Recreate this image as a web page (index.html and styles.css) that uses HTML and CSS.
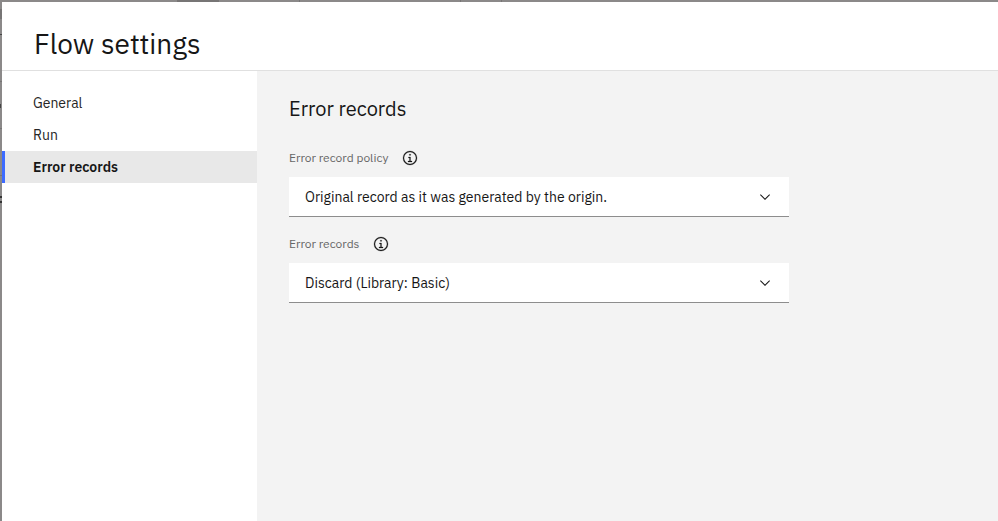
FILE: index.html
```
<!DOCTYPE html>
<html lang="en">
<head>
<meta charset="utf-8">
<meta name="viewport" content="width=device-width, initial-scale=1">
<title>Flow settings</title>
<link rel="stylesheet" href="styles.css">
</head>
<body>
<div class="modal" role="dialog" aria-labelledby="modal-title">
  <header class="modal-header">
    <h1 id="modal-title">Flow settings</h1>
  </header>
  <div class="modal-body">
    <nav class="side-nav">
      <a class="nav-link" href="#general">General</a>
      <a class="nav-link" href="#run">Run</a>
      <a class="nav-link nav-link-active" href="#error-records" aria-current="page">Error records</a>
    </nav>
    <main class="panel">
      <h2>Error records</h2>
      <div class="field">
        <div class="field-label">
          <label for="policy">Error record policy</label>
          <button class="info" type="button" aria-label="More information">
            <svg viewBox="0 0 32 32"><path d="M17 22V14h-4v2h2v6h-3v2h8v-2zM16 8a1.500 1.500 0 1 0 1.500 1.500A1.500 1.500 0 0 0 16 8z"/><path d="M16 30a14 14 0 1 1 14-14 14 14 0 0 1-14 14zm0-26a12 12 0 1 0 12 12A12 12 0 0 0 16 4z"/></svg>
          </button>
        </div>
        <div class="select-wrap">
          <select id="policy"><option>Original record as it was generated by the origin.</option></select>
          <svg class="chevron" viewBox="0 0 16 16"><path d="M8 11L3 6l.7-.7L8 9.600l4.300-4.300.7.7z"/></svg>
        </div>
      </div>
      <div class="field">
        <div class="field-label">
          <label for="target">Error records</label>
          <button class="info" type="button" aria-label="More information">
            <svg viewBox="0 0 32 32"><path d="M17 22V14h-4v2h2v6h-3v2h8v-2zM16 8a1.500 1.500 0 1 0 1.500 1.500A1.500 1.500 0 0 0 16 8z"/><path d="M16 30a14 14 0 1 1 14-14 14 14 0 0 1-14 14zm0-26a12 12 0 1 0 12 12A12 12 0 0 0 16 4z"/></svg>
          </button>
        </div>
        <div class="select-wrap">
          <select id="target"><option>Discard (Library: Basic)</option></select>
          <svg class="chevron" viewBox="0 0 16 16"><path d="M8 11L3 6l.7-.7L8 9.600l4.300-4.300.7.7z"/></svg>
        </div>
      </div>
    </main>
  </div>
</div>
</body>
</html>
```
FILE: styles.css
```
* {
  box-sizing: border-box;
}

/* The dimmed page behind the dialog shows along the top and left edges. */
body {
  margin: 0;
  min-height: 100vh;
  display: flex;
  padding: 2px 0 0 2px;
  background:
    linear-gradient(#777575, #777575) 177px 0 / 42px 2px no-repeat,
    linear-gradient(#777575, #777575) 299px 0 / 1px 2px no-repeat,
    linear-gradient(#777575, #777575) 460px 0 / 1px 2px no-repeat,
    linear-gradient(#777575, #777575) 501px 0 / 1px 2px no-repeat,
    linear-gradient(#777575, #777575) 0 9px / 2px 10px no-repeat,
    linear-gradient(#444, #444) 0 34px / 2px 1px no-repeat,
    linear-gradient(#777575, #777575) 0 81px / 2px 1px no-repeat,
    linear-gradient(#444, #444) 0 104px / 1px 4px no-repeat,
    linear-gradient(#777575, #777575) 0 128px / 2px 1px no-repeat,
    linear-gradient(#777575, #777575) 0 175px / 2px 1px no-repeat,
    linear-gradient(#333, #333) 0 196px / 2px 2px no-repeat,
    linear-gradient(#333, #333) 0 201px / 2px 2px no-repeat,
    #8b8989;
  color: #161616;
  font-family: "IBM Plex Sans", Roboto, "Liberation Sans", sans-serif;
  font-size: 14px;
  line-height: 18px;
}

.modal {
  flex: 1;
  display: flex;
  flex-direction: column;
  background: #fff;
}

.modal-header {
  padding: 24px 32px 8px;
  border-bottom: 1px solid #e0e0e0;
}

h1,
h2 {
  margin: 0;
  font-weight: 400;
}

h1 {
  font-size: 28px;
  line-height: 36px;
}

h2 {
  font-size: 20px;
  line-height: 28px;
  margin-bottom: 24px;
}

.modal-body {
  flex: 1;
  display: flex;
}

.side-nav {
  flex: 0 0 255px;
  padding-top: 16px;
}

.nav-link {
  display: block;
  padding: 7px 28px;
  border-left: 3px solid transparent;
  color: #262626;
  text-decoration: none;
}

.nav-link-active {
  background: #e8e8e8;
  border-left-color: #3d6bff;
  color: #161616;
  font-weight: 600;
}

.panel {
  flex: 1;
  padding: 24px 32px;
  background: #f3f3f3;
}

.field {
  max-width: 500px;
  margin-bottom: 16px;
}

.field-label {
  display: flex;
  align-items: center;
  gap: 14px;
  height: 22px;
  margin-bottom: 8px;
  color: #666;
  font-size: 12px;
}

.info {
  display: flex;
  padding: 0;
  border: 0;
  background: none;
}

.info svg {
  width: 16px;
  height: 16px;
  fill: #161616;
  stroke: #161616;
  stroke-width: 0.5;
}

.select-wrap {
  position: relative;
}

select {
  display: block;
  width: 100%;
  height: 40px;
  padding: 0 48px 0 16px;
  appearance: none;
  border: 0;
  border-bottom: 1px solid #8d8d8d;
  border-radius: 0;
  background: #fff;
  color: #161616;
  font: inherit;
}

.chevron {
  position: absolute;
  top: 12px;
  right: 16px;
  width: 16px;
  height: 16px;
  fill: #161616;
  pointer-events: none;
}
```
